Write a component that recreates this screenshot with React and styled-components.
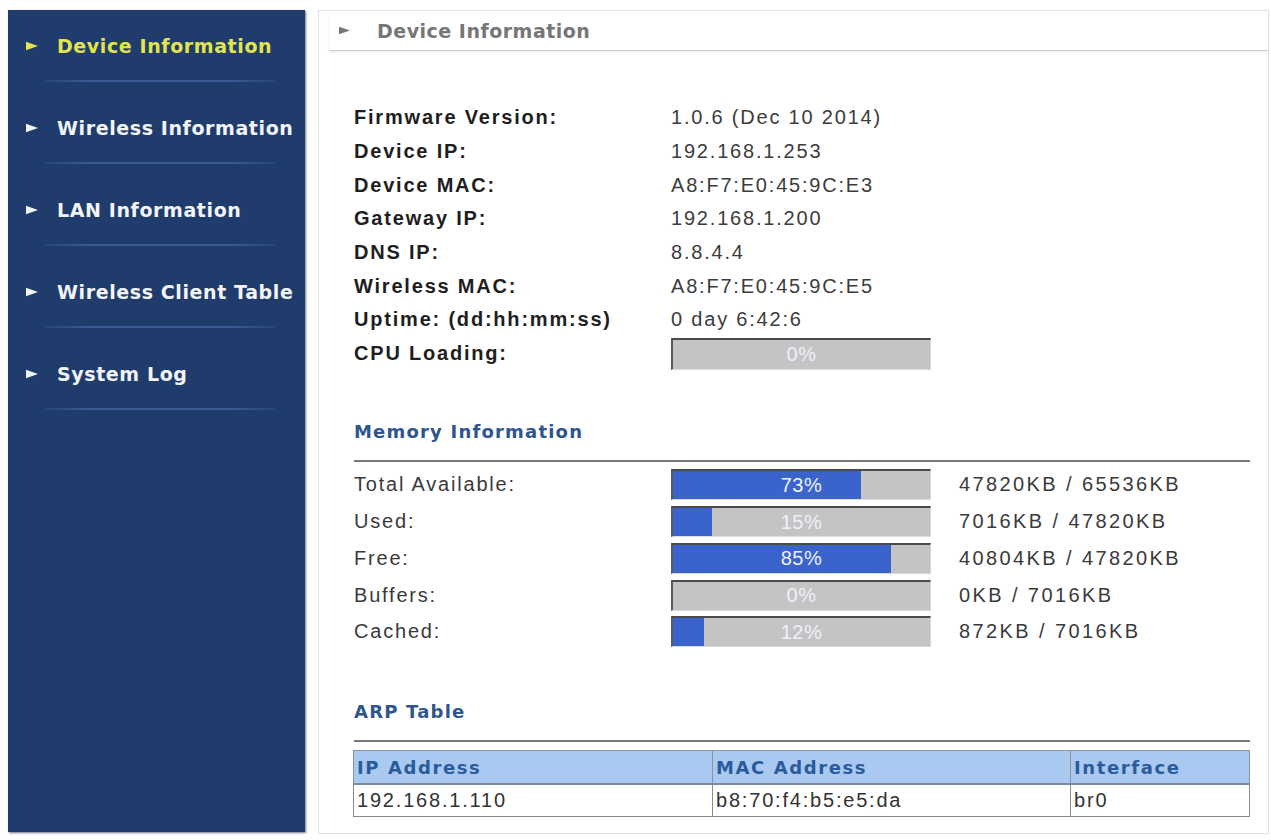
import React from 'react';
import styled, { createGlobalStyle } from 'styled-components';

const GlobalStyle = createGlobalStyle`
  html, body {
    margin: 0;
    padding: 0;
    background: #ffffff;
  }
`;

const navItems = [
  { label: 'Device Information', active: true },
  { label: 'Wireless Information' },
  { label: 'LAN Information' },
  { label: 'Wireless Client Table' },
  { label: 'System Log' },
];

const deviceInfo = [
  ['Firmware Version:', '1.0.6 (Dec 10 2014)'],
  ['Device IP:', '192.168.1.253'],
  ['Device MAC:', 'A8:F7:E0:45:9C:E3'],
  ['Gateway IP:', '192.168.1.200'],
  ['DNS IP:', '8.8.4.4'],
  ['Wireless MAC:', 'A8:F7:E0:45:9C:E5'],
  ['Uptime: (dd:hh:mm:ss)', '0 day 6:42:6'],
];

const memory = [
  { label: 'Total Available:', pct: 73, text: '47820KB / 65536KB' },
  { label: 'Used:', pct: 15, text: '7016KB / 47820KB' },
  { label: 'Free:', pct: 85, text: '40804KB / 47820KB' },
  { label: 'Buffers:', pct: 0, text: '0KB / 7016KB' },
  { label: 'Cached:', pct: 12, text: '872KB / 7016KB' },
];

const arp = [
  ['192.168.1.110', 'b8:70:f4:b5:e5:da', 'br0'],
];

const Page = styled.div`
  display: flex;
  gap: 13px;
  height: 840px;
  box-sizing: border-box;
  padding: 10px 3px 6px 8px;
`;

const Sidebar = styled.nav`
  width: 297px;
  flex-shrink: 0;
  height: 822px;
  background: #1f3c6d;
  box-shadow: 1px 1px 2px rgba(10, 25, 55, 0.6);
  padding-top: 26px;
  box-sizing: border-box;
`;

const NavItem = styled.div`
  display: flex;
  align-items: center;
  height: 20px;
  padding-left: 18px;
  font-family: "DejaVu Sans", Verdana, sans-serif;
  font-weight: bold;
  font-size: 19px;
  letter-spacing: 0.6px;
  color: ${(p) => (p.$active ? '#e2e54c' : '#f2f4f8')};
  white-space: nowrap;
`;

const NavArrow = styled.svg`
  width: 12px;
  height: 10px;
  margin-right: 19px;
  flex-shrink: 0;
`;

const NavDivider = styled.div`
  height: 2px;
  margin: 24px 30px 36px 37px;
  background: linear-gradient(90deg, rgba(70, 105, 160, 0.2), #3b5d93 20%, #3b5d93 80%, rgba(70, 105, 160, 0.2));
`;

const Main = styled.main`
  flex: 1;
  border: 1px solid #e4e4e4;
  display: flex;
  flex-direction: column;
`;

const Header = styled.div`
  display: flex;
  align-items: center;
  height: 39px;
  margin-left: 10px;
  padding-left: 10px;
  border-bottom: 1px solid #cfcfcf;
  box-shadow: 0 2px 2px rgba(0, 0, 0, 0.06);
  font-family: "DejaVu Sans", Verdana, sans-serif;
  font-weight: bold;
  font-size: 19px;
  letter-spacing: 0.5px;
  color: #767676;
`;

const HeaderArrow = styled.svg`
  width: 11px;
  height: 9px;
  margin-right: 27px;
`;

const Content = styled.div`
  padding: 50px 18px 0 35px;
`;

const InfoRow = styled.div`
  display: grid;
  grid-template-columns: 317px 1fr;
  align-items: center;
  height: 33.7px;
  font-family: "Liberation Sans", Arial, sans-serif;
  font-size: 20px;
  letter-spacing: 1.8px;
`;

const Label = styled.div`
  font-weight: ${(p) => (p.$bold ? 'bold' : 'normal')};
  color: ${(p) => (p.$bold ? '#1e1e1e' : '#3a3a3a')};
  white-space: nowrap;
`;

const Value = styled.div`
  color: #3c3c3c;
  white-space: nowrap;
`;

const Bar = styled.div`
  position: relative;
  width: 260px;
  height: ${(p) => p.$h}px;
  box-sizing: border-box;
  background: #c4c4c4;
  border-top: 2px solid #4a4a4a;
  border-left: 2px solid #5a5a5a;
  border-bottom: 1px solid #dadada;
  border-right: 1px solid #d6d6d6;
  overflow: hidden;
`;

const BarFill = styled.div`
  height: 100%;
  background: #3a63cb;
`;

const BarText = styled.span`
  position: absolute;
  inset: 0;
  display: flex;
  align-items: center;
  justify-content: center;
  font-family: "Liberation Sans", Arial, sans-serif;
  font-size: 20px;
  letter-spacing: 0.5px;
  color: #eef1f8;
`;

const SectionTitle = styled.h2`
  margin: ${(p) => p.$mt}px 0 0;
  padding-bottom: ${(p) => p.$pb}px;
  border-bottom: 2px solid #7a7a7a;
  line-height: 24px;
  font-family: "DejaVu Sans", Verdana, sans-serif;
  font-weight: bold;
  font-size: 18px;
  letter-spacing: 1.2px;
  color: #2e5590;
`;

const MemoryList = styled.div`
  margin-top: 5px;
`;

const MemoryRow = styled.div`
  display: grid;
  grid-template-columns: 317px 260px 1fr;
  align-items: center;
  height: 36.75px;
  font-family: "Liberation Sans", Arial, sans-serif;
  font-size: 20px;
  letter-spacing: 1.8px;
`;

const MemoryText = styled.div`
  padding-left: 28px;
  color: #3a3a3a;
  white-space: nowrap;
  letter-spacing: 2.4px;
`;

const Table = styled.table`
  margin: 8px 0 0 -1px;
  width: 896px;
  border-collapse: collapse;
  border: 1px solid #8a8a8a;
  table-layout: fixed;
`;

const Th = styled.th`
  height: 32px;
  padding: 0 0 0 3px;
  text-align: left;
  background: #a9c9f1;
  border: 1px solid #8a93a3;
  border-bottom: 2px solid #7c8aa0;
  font-family: "DejaVu Sans", Verdana, sans-serif;
  font-weight: bold;
  font-size: 18px;
  letter-spacing: 1.6px;
  color: #2a5b9c;
`;

const Td = styled.td`
  height: 31px;
  padding: 0 0 0 3px;
  border: 1px solid #8a8a8a;
  font-family: "Liberation Sans", Arial, sans-serif;
  font-size: 20px;
  letter-spacing: 1.8px;
  color: #333333;
`;

const Triangle = ({ color, as: Comp }) => (
  <Comp viewBox="0 0 10 8">
    <path d="M0 0.5 L10 4 L0 7.5 Z" fill={color} />
  </Comp>
);

const ProgressBar = ({ pct, h }) => (
  <Bar $h={h}>
    <BarFill style={{ width: `${pct}%` }} />
    <BarText>{pct}%</BarText>
  </Bar>
);

const App = () => (
  <>
    <GlobalStyle />
    <Page>
      <Sidebar>
        {navItems.map((item) => (
          <React.Fragment key={item.label}>
            <NavItem $active={item.active}>
              <Triangle as={NavArrow} color={item.active ? '#e2e54c' : '#f2f4f8'} />
              {item.label}
            </NavItem>
            <NavDivider />
          </React.Fragment>
        ))}
      </Sidebar>
      <Main>
        <Header>
          <Triangle as={HeaderArrow} color="#777777" />
          Device Information
        </Header>
        <Content>
          {deviceInfo.map(([label, value]) => (
            <InfoRow key={label}>
              <Label $bold>{label}</Label>
              <Value>{value}</Value>
            </InfoRow>
          ))}
          <InfoRow>
            <Label $bold>CPU Loading:</Label>
            <ProgressBar pct={0} h={32} />
          </InfoRow>

          <SectionTitle $mt={49} $pb={16}>Memory Information</SectionTitle>
          <MemoryList>
            {memory.map((m) => (
              <MemoryRow key={m.label}>
                <Label>{m.label}</Label>
                <ProgressBar pct={m.pct} h={31} />
                <MemoryText>{m.text}</MemoryText>
              </MemoryRow>
            ))}
          </MemoryList>

          <SectionTitle $mt={50} $pb={16}>ARP Table</SectionTitle>
          <Table>
            <colgroup>
              <col style={{ width: '359px' }} />
              <col style={{ width: '358px' }} />
              <col style={{ width: '179px' }} />
            </colgroup>
            <thead>
              <tr>
                <Th>IP Address</Th>
                <Th>MAC Address</Th>
                <Th>Interface</Th>
              </tr>
            </thead>
            <tbody>
              {arp.map((row) => (
                <tr key={row[0]}>
                  {row.map((cell) => (
                    <Td key={cell}>{cell}</Td>
                  ))}
                </tr>
              ))}
            </tbody>
          </Table>
        </Content>
      </Main>
    </Page>
  </>
);

export default App;
